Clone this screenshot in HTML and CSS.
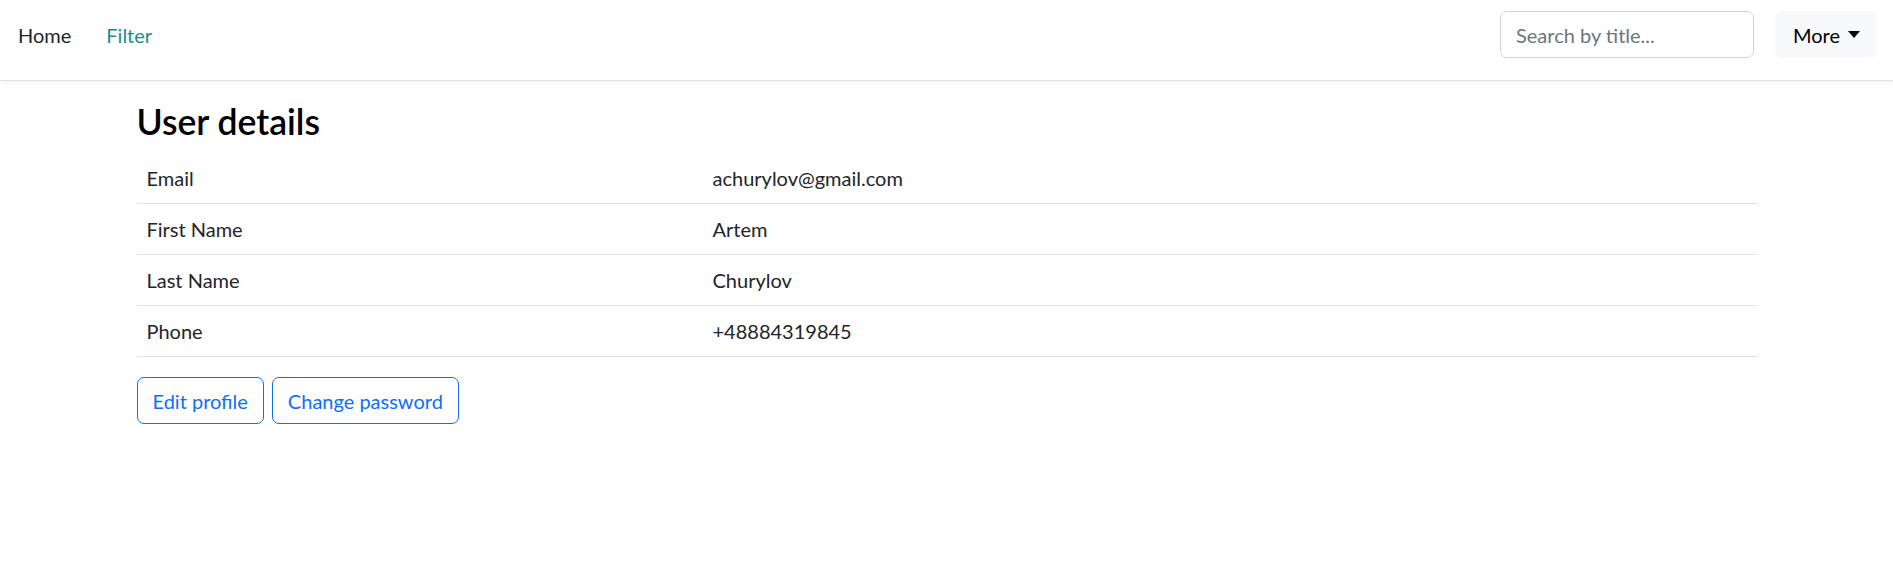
FILE: index.html
```html
<!DOCTYPE html>
<html lang="en">
<head>
<meta charset="utf-8">
<title>User details</title>
<link rel="stylesheet" href="styles.css">
</head>
<body>
<nav class="navbar">
  <div class="nav-links">
    <a class="nav-link" href="#">Home</a>
    <a class="nav-link active" href="#">Filter</a>
  </div>
  <div class="nav-right">
    <input class="search" type="text" placeholder="Search by title...">
    <button class="btn-more" type="button">More<span class="caret"></span></button>
  </div>
</nav>
<main class="container">
  <h3 class="title">User details</h3>
  <table class="details">
    <tbody>
      <tr><td class="label">Email</td><td>achurylov@gmail.com</td></tr>
      <tr><td class="label">First Name</td><td>Artem</td></tr>
      <tr><td class="label">Last Name</td><td>Churylov</td></tr>
      <tr><td class="label">Phone</td><td>+48884319845</td></tr>
    </tbody>
  </table>
  <div class="actions">
    <button class="btn-outline" type="button">Edit profile</button>
    <button class="btn-outline" type="button">Change password</button>
  </div>
</main>
</body>
</html>
```

FILE: styles.css
```css
* { box-sizing: border-box; }

body {
  margin: 0;
  font-family: "Lato", "Noto Sans", sans-serif;
  font-size: 20px;
  line-height: 1.5;
  color: #212529;
  background: #fff;
}

.navbar {
  display: flex;
  align-items: center;
  justify-content: space-between;
  height: 80px;
  padding: 11px 16px 22px 0;
  background: #fff;
  box-shadow: 0 1px 1px rgba(0, 0, 0, 0.08), 0 2px 8px rgba(0, 0, 0, 0.06);
}

.nav-links {
  display: flex;
  align-items: center;
}

.nav-link {
  padding: 0 17px 0 18px;
  color: #212529;
  text-decoration: none;
}

.nav-link.active {
  color: #1e8c87;
}

.nav-right {
  display: flex;
  align-items: center;
  gap: 21px;
}

.search {
  width: 254px;
  height: 47px;
  padding: 7px 15px;
  font: inherit;
  color: #212529;
  border: 1px solid #ced4da;
  border-radius: 7px;
  background: #fff;
}

.search::placeholder {
  color: #6c757d;
}

.btn-more {
  display: flex;
  align-items: center;
  height: 47px;
  padding: 7px 16px 7px 17px;
  font: inherit;
  color: #000;
  background: #f8f9fa;
  border: 1px solid #f8f9fa;
  border-radius: 7px;
}

.caret {
  display: inline-block;
  margin-left: 8px;
  width: 0;
  height: 0;
  border-top: 7px solid #000;
  border-left: 6px solid transparent;
  border-right: 6px solid transparent;
}

.container {
  width: 1620px;
  margin: 0 auto;
  padding-top: 21px;
}

.title {
  margin: 0 0 10px;
  font-size: 35.5px;
  font-weight: 600;
  line-height: 42px;
  color: #000;
}

.details {
  width: 100%;
  border-collapse: collapse;
  margin-bottom: 20px;
}

.details td {
  padding: 10px;
  border-bottom: 1px solid #dee2e6;
  vertical-align: top;
}

.details td.label {
  width: 566px;
}

.actions {
  display: flex;
  gap: 8px;
}

.btn-outline {
  height: 47px;
  padding: 7px 15px;
  font: inherit;
  color: #0d6efd;
  background: transparent;
  border: 1px solid #0d6efd;
  border-radius: 7px;
}
```
